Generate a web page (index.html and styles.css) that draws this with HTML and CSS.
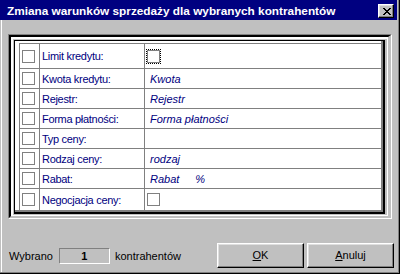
FILE: index.html
```html
<!DOCTYPE html>
<html lang="pl">
<head>
<meta charset="utf-8">
<title>Zmiana warunków sprzedaży</title>
<link rel="stylesheet" href="styles.css">
</head>
<body>
<div class="window">
  <div class="wframe">
    <div class="titlebar">
      <span class="title">Zmiana warunków sprzedaży dla wybranych kontrahentów</span>
      <span class="close"><svg width="8" height="7" viewBox="0 0 8 7" shape-rendering="crispEdges"><path fill="#000" d="M0 0h2v1H0zM6 0h2v1H6zM1 1h2v1H1zM5 1h2v1H5zM2 2h4v1H2zM3 3h2v1H3zM2 4h4v1H2zM1 5h2v1H1zM5 5h2v1H5zM0 6h2v1H0zM6 6h2v1H6z"/></svg></span>
    </div>
    <div class="client">
      <div class="b1"><div class="b2"><div class="b3"><div class="b4"><div class="b5"><div class="b6">
        <div class="grid">
          <div class="row first">
            <div class="c1"><span class="cb"></span></div>
            <div class="c2">Limit kredytu:</div>
            <div class="c3"><span class="focus"><span class="cb inner"></span></span></div>
          </div>
          <div class="row">
            <div class="c1"><span class="cb"></span></div>
            <div class="c2">Kwota kredytu:</div>
            <div class="c3">Kwota</div>
          </div>
          <div class="row">
            <div class="c1"><span class="cb"></span></div>
            <div class="c2">Rejestr:</div>
            <div class="c3">Rejestr</div>
          </div>
          <div class="row">
            <div class="c1"><span class="cb"></span></div>
            <div class="c2">Forma płatności:</div>
            <div class="c3">Forma płatności</div>
          </div>
          <div class="row">
            <div class="c1"><span class="cb"></span></div>
            <div class="c2">Typ ceny:</div>
            <div class="c3"></div>
          </div>
          <div class="row">
            <div class="c1"><span class="cb"></span></div>
            <div class="c2">Rodzaj ceny:</div>
            <div class="c3">rodzaj</div>
          </div>
          <div class="row">
            <div class="c1"><span class="cb"></span></div>
            <div class="c2">Rabat:</div>
            <div class="c3">Rabat<span class="pct">%</span></div>
          </div>
          <div class="row last">
            <div class="c1"><span class="cb"></span></div>
            <div class="c2">Negocjacja ceny:</div>
            <div class="c3"><span class="cb plain"></span></div>
          </div>
        </div>
      </div></div></div></div></div></div>
      <div class="footer">
        <span class="lbl">Wybrano</span>
        <span class="count">1</span>
        <span class="lbl lbl2">kontrahentów</span>
        <button class="btn ok"><u>O</u>K</button>
        <button class="btn"><u>A</u>nuluj</button>
      </div>
    </div>
  </div>
</div>
</body>
</html>
```

FILE: styles.css
```css
html, body {
  margin: 0;
  padding: 0;
}
body {
  background: #c0c0c0;
  width: 400px;
  height: 274px;
  overflow: hidden;
  font-family: "Liberation Sans", Arial, sans-serif;
  font-size: 11px;
  color: #000;
}
.window {
  box-sizing: border-box;
  width: 400px;
  height: 274px;
  border-right: 1px solid #000;
  border-bottom: 1px solid #000;
}
.wframe {
  box-sizing: border-box;
  height: 100%;
  border-right: 1px solid #808080;
  border-bottom: 1px solid #808080;
  padding-right: 1px;
  display: flex;
  flex-direction: column;
}
.titlebar {
  height: 20px;
  flex: none;
  background: #000080;
  display: flex;
  align-items: center;
}
.title {
  color: #fff;
  font-weight: bold;
  font-size: 11.8px;
  padding-left: 7px;
  padding-top: 1px;
  white-space: nowrap;
}
.close {
  margin-left: auto;
  margin-right: 3px;
  align-self: flex-start;
  margin-top: 4px;
  box-sizing: border-box;
  width: 16px;
  height: 14px;
  background: #c0c0c0;
  border: 1px solid;
  border-color: #fff #000 #000 #fff;
  box-shadow: inset -1px -1px #808080, inset 1px 1px #dfdfdf;
  display: flex;
  align-items: flex-start;
  padding: 3px 0 0 4px;
}
.close svg {
  display: block;
}
.client {
  flex: 1;
  margin-left: 1px;
  border-left: 1px solid #fff;
  display: flex;
  flex-direction: column;
}
.b1, .b2, .b3, .b4, .b5, .b6 {
  box-sizing: border-box;
  height: 100%;
  border-style: solid;
}
.b1 {
  margin: 14px 0 0 6px;
  width: 384px;
  height: 185px;
  flex: none;
  border-width: 1px;
  border-color: #808080 #fff #fff #808080;
}
.b2 {
  border-width: 2px 3px 2px 2px;
  border-color: #000 #c0c0c0 #c0c0c0 #000;
}
.b3 {
  border-width: 2px 1px 1px 2px;
  border-color: #fff;
}
.b4 {
  border-width: 1px 2px 1px 1px;
  border-color: #c0c0c0;
}
.b5 {
  border-width: 1px 2px 2px 1px;
  border-color: #000;
}
.b6 {
  border-width: 0 2px 2px 0;
  border-color: #808080;
  background: #fff;
  overflow: hidden;
}
.grid {
  box-sizing: border-box;
  margin: 2px 0 0 4px;
  height: calc(100% - 2px);
  border-left: 1px solid #808080;
  display: flex;
  flex-direction: column;
}
.row {
  display: grid;
  grid-template-columns: 20px 105px 1fr;
  border-top: 1px solid #808080;
  height: 19px;
  flex: none;
}
.row.first {
  height: 24px;
}
.row.last {
  flex: 1;
}
.c1, .c2, .c3 {
  box-sizing: border-box;
  display: flex;
  align-items: center;
  white-space: nowrap;
}
.c1, .c2 {
  border-right: 1px solid #808080;
}
.c2 {
  padding-left: 2px;
  color: #000080;
  letter-spacing: -0.3px;
}
.c3 {
  padding-left: 5px;
  color: #000080;
  font-style: italic;
}
.cb {
  display: block;
  box-sizing: border-box;
  width: 13px;
  height: 13px;
  border: 1px solid #808080;
  background: #fff;
  margin-left: 2px;
}
.focus {
  display: block;
  border: 1px dotted #000;
  margin-left: -4px;
}
.cb.inner {
  margin: 0;
}
.cb.plain {
  margin-left: -3px;
}
.pct {
  margin-left: 16px;
}
.footer {
  display: flex;
  align-items: center;
  margin-top: 24px;
  height: 25px;
  padding-left: 7px;
}
.lbl {
  white-space: nowrap;
}
.count {
  box-sizing: border-box;
  width: 51px;
  height: 16px;
  margin-left: 6px;
  border: 1px solid;
  border-color: #808080 #fff #fff #808080;
  font-weight: bold;
  text-align: center;
  line-height: 14px;
}
.lbl2 {
  margin-left: 5px;
}
.btn {
  box-sizing: border-box;
  width: 87px;
  height: 25px;
  margin: 0 3px 0 0;
  padding: 0 0 2px 0;
  background: #c0c0c0;
  border: 1px solid;
  border-color: #fff #000 #000 #fff;
  box-shadow: inset -1px -1px #808080, inset 1px 1px #dfdfdf;
  font-family: "Liberation Sans", Arial, sans-serif;
  font-size: 11px;
  color: #000;
}
.btn.ok {
  margin-left: auto;
}
```
